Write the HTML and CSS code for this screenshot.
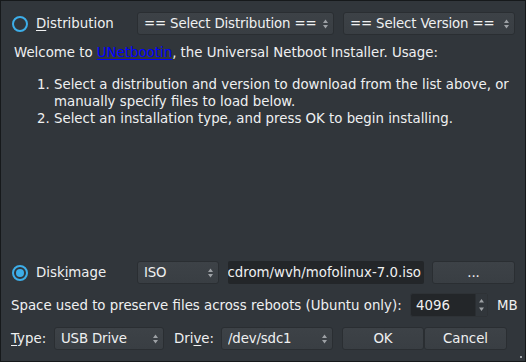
FILE: index.html
```html
<!DOCTYPE html>
<html>
<head>
<meta charset="utf-8">
<link rel="stylesheet" href="styles.css">
</head>
<body>
<div class="window">
  <div class="row row-top">
    <label class="radio-label">
      <svg class="radio" width="16" height="16" viewBox="0 0 16 16"><circle cx="8" cy="8" r="7" fill="none" stroke="#3daee9" stroke-width="2"/></svg>
      <span><u>D</u>istribution</span>
    </label>
    <div class="combo w-dist"><span class="ctext">== Select Distribution ==</span><svg class="arrows" width="7" height="12" viewBox="0 0 7 12"><path d="M3.5 1.5 L6 5 L1 5 Z M1 7 L6 7 L3.5 10.5 Z" fill="#9da1a5"/></svg></div>
    <div class="combo w-ver"><span class="ctext">== Select Version ==</span><svg class="arrows" width="7" height="12" viewBox="0 0 7 12"><path d="M3.5 1.5 L6 5 L1 5 Z M1 7 L6 7 L3.5 10.5 Z" fill="#9da1a5"/></svg></div>
  </div>

  <div class="info">
    <p class="welcome">Welcome to <a href="#">UNetbootin</a>, the Universal Netboot Installer. Usage:</p>
    <ol class="steps">
      <li>Select a distribution and version to download from the list above, or manually specify files to load below.</li>
      <li>Select an installation type, and press OK to begin installing.</li>
    </ol>
  </div>

  <div class="row row-disk">
    <label class="radio-label">
      <svg class="radio" width="16" height="16" viewBox="0 0 16 16"><circle cx="8" cy="8" r="7" fill="none" stroke="#3daee9" stroke-width="2"/><circle cx="8" cy="8" r="4" fill="#3daee9"/></svg>
      <span>Disk<u>i</u>mage</span>
    </label>
    <div class="combo w-iso"><span class="ctext">ISO</span><svg class="arrows" width="7" height="12" viewBox="0 0 7 12"><path d="M3.5 1.5 L6 5 L1 5 Z M1 7 L6 7 L3.5 10.5 Z" fill="#9da1a5"/></svg></div>
    <div class="field w-path"><span>cdrom/wvh/mofolinux-7.0.iso</span></div>
    <div class="button w-btn">...</div>
  </div>

  <div class="row row-space">
    <span class="space-label">Space used to preserve files across reboots (Ubuntu only):</span>
    <div class="spin"><span class="spin-val">4096</span><span class="spin-btns"><svg width="7" height="16" viewBox="0 0 7 16"><path d="M3.5 2 L6 5.5 L1 5.5 Z M1 10.5 L6 10.5 L3.5 14 Z" fill="#9da1a5"/></svg></span></div>
    <span class="mb">MB</span>
  </div>

  <div class="row row-bottom">
    <span class="lbl"><u>T</u>ype:</span>
    <div class="combo w-type"><span class="ctext">USB Drive</span><svg class="arrows" width="7" height="12" viewBox="0 0 7 12"><path d="M3.5 1.5 L6 5 L1 5 Z M1 7 L6 7 L3.5 10.5 Z" fill="#9da1a5"/></svg></div>
    <span class="lbl lbl-drive">Dri<u>v</u>e:</span>
    <div class="combo w-drive"><span class="ctext">/dev/sdc1</span><svg class="arrows" width="7" height="12" viewBox="0 0 7 12"><path d="M3.5 1.5 L6 5 L1 5 Z M1 7 L6 7 L3.5 10.5 Z" fill="#9da1a5"/></svg></div>
    <div class="button w-ok">OK</div>
    <div class="button w-btn">Cancel</div>
  </div>
  <span class="grip"></span>
</div>
</body>
</html>
```

FILE: styles.css
```css
* { box-sizing: border-box; }
html, body { margin: 0; padding: 0; background: #31363b; }
.window {
  position: relative;
  width: 526px;
  height: 362px;
  border: 1px solid #16191b;
  background: #31363b;
  color: #eff0f1;
  font-family: "DejaVu Sans", sans-serif;
  font-size: 13.33px;
  padding: 11px 10px 11px 9px;
  display: flex;
  flex-direction: column;
}
u { text-decoration: underline; text-underline-offset: 2px; }
.row { display: flex; align-items: center; }
.row-top { height: 23px; }
.radio-label { display: flex; align-items: center; width: 127px; padding-left: 2px; gap: 8px; flex: none; }
.radio { display: block; flex: none; }
.combo {
  height: 23px;
  display: flex;
  align-items: center;
  padding: 0 4px 0 6px;
  background: linear-gradient(#3d4247, #393e43);
  border: 1px solid #2a2e32;
  border-radius: 3px;
  white-space: nowrap;
  flex: none;
}
.ctext { flex: 1; min-width: 0; overflow: hidden; letter-spacing: -0.15px; }
.arrows { display: block; flex: none; margin-left: 4px; }
.w-dist { width: 197px; }
.w-ver { width: 172px; margin-left: 9px; }
.info { margin-top: 9px; padding-left: 4px; line-height: 17px; flex: 1; }
.welcome { margin: 0; }
.welcome a { color: #0000ff; text-decoration: underline; text-underline-offset: 2px; }
.steps { margin: 15px 0 0 0; padding-left: 40px; }
.steps li { padding-left: 0; }
.row-disk { height: 23px; }
.w-iso { width: 82px; }
.field {
  width: 196px;
  height: 23px;
  margin-left: 9px;
  background: #232629;
  border-radius: 2px;
  overflow: hidden;
  display: flex;
  align-items: center;
  justify-content: flex-end;
  padding-right: 3px;
  white-space: nowrap;
}
.button {
  height: 23px;
  display: flex;
  align-items: center;
  justify-content: center;
  background: linear-gradient(#3d4247, #393e43);
  border: 1px solid #2a2e32;
  border-radius: 3px;
  flex: none;
}
.w-path + .w-btn { margin-left: 8px; }
.w-btn { width: 83px; }
.w-ok { width: 82px; margin-left: 9px; }
.row-space { height: 24px; margin-top: 9px; padding-left: 1px; }
.space-label { flex: none; width: 399px; }
.spin {
  width: 78px;
  height: 24px;
  display: flex;
  background: #232629;
  border: 1px solid #2e3236;
  border-radius: 3px;
  flex: none;
}
.spin-val { flex: 1; padding-left: 5px; display: flex; align-items: center; }
.spin-btns { width: 12px; display: flex; align-items: center; justify-content: center; background: #31363b; border-left: 1px solid #2a2e32; }
.spin-btns svg { display: block; }
.mb { margin-left: 9px; }
.row-bottom { height: 23px; margin-top: 10px; padding-left: 1px; }
.lbl { flex: none; width: 43px; }
.lbl-drive { width: 47px; margin-left: 10px; }
.w-type { width: 110px; }
.w-drive { width: 112px; }
.grip { position: absolute; right: 3px; bottom: 3px; width: 2px; height: 2px; background: #9da1a5; }
```
